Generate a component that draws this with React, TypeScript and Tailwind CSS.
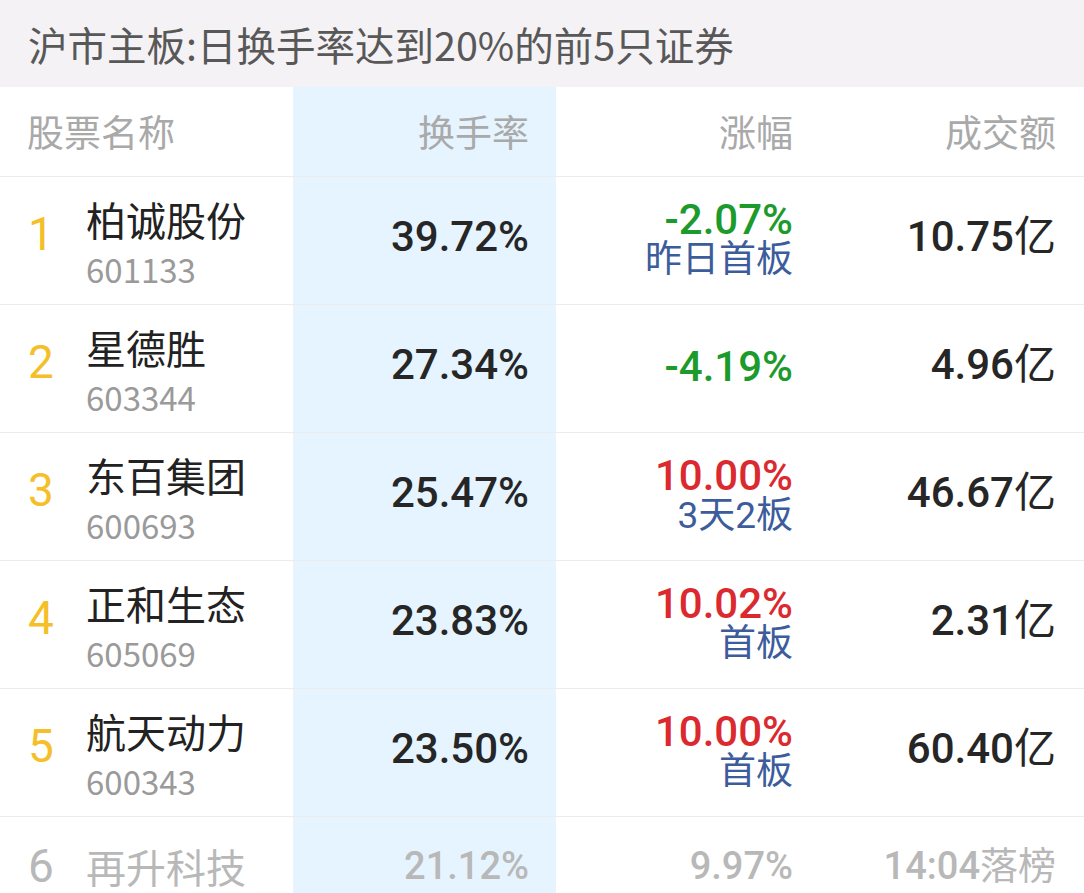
import React from "react";

type Row = {
  rank: string;
  name: string;
  code?: string;
  turnover: string;
  change: string;
  changeColor: string;
  tag?: string;
  amount: string;
};

const rows: Row[] = [
  { rank: "1", name: "柏诚股份", code: "601133", turnover: "39.72%", change: "-2.07%", changeColor: "text-[#1c9a2c]", tag: "昨日首板", amount: "10.75" },
  { rank: "2", name: "星德胜", code: "603344", turnover: "27.34%", change: "-4.19%", changeColor: "text-[#1c9a2c]", amount: "4.96" },
  { rank: "3", name: "东百集团", code: "600693", turnover: "25.47%", change: "10.00%", changeColor: "text-[#db2a2f]", tag: "3天2板", amount: "46.67" },
  { rank: "4", name: "正和生态", code: "605069", turnover: "23.83%", change: "10.02%", changeColor: "text-[#db2a2f]", tag: "首板", amount: "2.31" },
  { rank: "5", name: "航天动力", code: "600343", turnover: "23.50%", change: "10.00%", changeColor: "text-[#db2a2f]", tag: "首板", amount: "60.40" },
];

const cjk = "font-['Noto_Sans_CJK_SC',sans-serif]";
const num = "font-['Roboto','Noto_Sans_CJK_SC',sans-serif]";

export default function App() {
  return (
    <div className="w-[1084px] h-[893px] overflow-hidden bg-white">
      <div className={`h-[87px] bg-[#f5f2f5] flex items-center pl-[28px] text-[39.5px] text-[#585858] ${cjk}`}>
        沪市主板:日换手率达到20%的前5只证券
      </div>
      <div className="grid grid-cols-[293px_263px_264px_264px] h-[90px] border-b border-[#ececec] text-[37px] text-[#a9a9a9]">
        <div className={`flex items-center pl-[27px] ${cjk}`}>股票名称</div>
        <div className={`flex items-center justify-end pr-[27px] bg-[#e5f4fe] ${cjk}`}>换手率</div>
        <div className={`flex items-center justify-end pr-[27px] ${cjk}`}>涨幅</div>
        <div className={`flex items-center justify-end pr-[28px] ${cjk}`}>成交额</div>
      </div>
      {rows.map((r) => (
        <div key={r.rank} className="grid grid-cols-[293px_263px_264px_264px] h-[128px] border-b border-[#ececec]">
          <div className="flex items-center pl-[28px]">
            <div className={`w-[58px] pb-[14px] text-[46px] leading-[48px] text-[#f5bf2a] ${num}`}>{r.rank}</div>
            <div className="flex flex-col pt-[6px]">
              <div className={`text-[40px] leading-[48px] text-[#222222] ${cjk}`}>{r.name}</div>
              <div className={`mt-[2px] text-[33px] leading-[48px] text-[#9a9a9a] ${cjk}`}>{r.code}</div>
            </div>
          </div>
          <div className="flex items-center justify-end pr-[27px] pb-[8px] bg-[#e5f4fe]">
            <span className={`text-[42px] leading-[48px] font-medium text-[#262626] ${num}`}>{r.turnover}</span>
          </div>
          <div className="flex flex-col items-end justify-center pr-[27px] pb-[4px]">
            <span className={`text-[42px] leading-[42px] font-medium ${r.changeColor} ${num}`}>{r.change}</span>
            {r.tag && (
              <span className={`text-[37px] leading-[38px] text-[#3c5c9c] ${num}`}>{r.tag}</span>
            )}
          </div>
          <div className="flex items-center justify-end pr-[28px] pb-[8px]">
            <span className={`text-[42px] leading-[48px] font-medium text-[#262626] ${num}`}>
              {r.amount}
              <span className="font-normal">亿</span>
            </span>
          </div>
        </div>
      ))}
      <div className="grid grid-cols-[293px_263px_264px_264px] h-[128px]">
        <div className="flex items-start pl-[28px] pt-[22px]">
          <div className={`w-[58px] text-[46px] leading-[54px] text-[#b8b8b8] ${num}`}>6</div>
          <div className={`text-[40px] leading-[54px] text-[#b8b8b8] ${cjk}`}>再升科技</div>
        </div>
        <div className="flex items-start justify-end pr-[27px] pt-[22px] bg-[#e5f4fe]">
          <span className={`text-[38px] leading-[54px] font-medium text-[#b8b8b8] ${num}`}>21.12%</span>
        </div>
        <div className="flex items-start justify-end pr-[27px] pt-[22px]">
          <span className={`text-[38px] leading-[54px] font-medium text-[#b8b8b8] ${num}`}>9.97%</span>
        </div>
        <div className="flex items-start justify-end pr-[28px] pt-[22px]">
          <span className={`text-[38px] leading-[54px] font-medium text-[#b8b8b8] ${num}`}>
            14:04<span className="font-normal">落榜</span>
          </span>
        </div>
      </div>
    </div>
  );
}
